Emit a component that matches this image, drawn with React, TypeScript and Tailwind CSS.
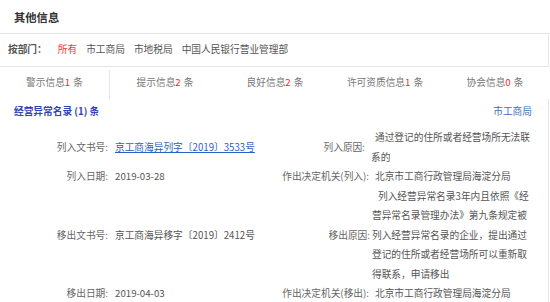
import React from 'react'

const tabs = [
  { name: '警示信息', count: 1 },
  { name: '提示信息', count: 2 },
  { name: '良好信息', count: 2 },
  { name: '许可资质信息', count: 1 },
  { name: '协会信息', count: 0 },
]

const depts = ['市工商局', '市地税局', '中国人民银行营业管理部']

const Label: React.FC<{ children: React.ReactNode; className?: string }> = ({ children, className = '' }) => (
  <div className={`flex items-center justify-end whitespace-nowrap text-[#666] ${className}`}>{children}</div>
)

const Value: React.FC<{ children: React.ReactNode; className?: string }> = ({ children, className = '' }) => (
  <div className={`flex items-center whitespace-nowrap text-[#555] ${className}`}>{children}</div>
)

export default function App() {
  return (
    <div
      className="w-[550px] h-[302px] overflow-hidden bg-white text-[9.7px] leading-[19.5px]"
      style={{ fontFamily: '"Noto Sans CJK SC", "Noto Sans", sans-serif' }}
    >
      <div className="flex h-[34px] items-center border-b border-[#e6e6e6] pl-[14px] pt-[3px]">
        <h2 className="text-[11.3px] font-bold text-[#333]">其他信息</h2>
      </div>

      <div className="mr-[1px] flex h-[33px] items-center gap-[9px] border-r border-b border-[#e6e6e6] pl-[8px] text-[#555]">
        <span className="font-bold text-[#555]">按部门：</span>
        <span className="ml-[2px] text-[#f33]">所有</span>
        {depts.map((d) => (
          <span key={d}>{d}</span>
        ))}
      </div>

      <div className="grid h-[32px] grid-cols-5 text-[#777]">
        {tabs.map((t, i) => (
          <div
            key={t.name}
            className={`flex items-center justify-center ${i === 0 ? 'mt-[3px] border-r border-[#e6e6e6] pb-[3px]' : ''}`}
          >
            {t.name}
            <span className="text-[#f22]">{t.count}</span>
            <span className="ml-[3px]">条</span>
          </div>
        ))}
      </div>

      <div className="mr-[1px] border-r border-[#e6e6e6]">
        <div className="flex h-[29px] items-start justify-between pl-[14px] pr-[16px] pt-[3px]">
          <span className="font-bold text-[#3344bb]">经营异常名录 (1) 条</span>
          <span className="text-[#3a6fc0]">市工商局</span>
        </div>

        <div className="grid grid-cols-[108px_258px_6px_172px]">
          <Label className="h-[39px]">列入文书号:</Label>
          <Value className="pl-[7px]">
            <a href="#" className="text-[#2b5fc7] underline">京工商海异列字〔2019〕3533号</a>
          </Value>
          <Label className="-ml-[40px] pr-[7px]">列入原因:</Label>
          <div className="-ml-[1px] text-[#555]">
            <div className="pl-[4px]">通过登记的住所或者经营场所无法联</div>
            <div>系的</div>
          </div>

          <Label className="h-[19.5px]">列入日期:</Label>
          <Value className="pl-[7px]">2019-03-28</Value>
          <Label className="-ml-[100px] pr-[3px]">作出决定机关(列入):</Label>
          <Value className="pl-[3px]">北京市工商行政管理局海淀分局</Value>

          <Label className="h-[97.5px]">移出文书号:</Label>
          <Value className="pl-[7px]">京工商海异移字〔2019〕2412号</Value>
          <Label className="-ml-[60px] pr-[2px]">移出原因:</Label>
          <div className="text-[#555]">
            <div className="pl-[6px]">列入经营异常名录3年内且依照《经</div>
            <div>营异常名录管理办法》第九条规定被</div>
            <div>列入经营异常名录的企业，提出通过</div>
            <div>登记的住所或者经营场所可以重新取</div>
            <div>得联系，申请移出</div>
          </div>

          <Label className="h-[19.5px]">移出日期:</Label>
          <Value className="pl-[7px]">2019-04-03</Value>
          <Label className="-ml-[100px] pr-[3px]">作出决定机关(移出):</Label>
          <Value className="pl-[3px]">北京市工商行政管理局海淀分局</Value>
        </div>
      </div>
    </div>
  )
}
